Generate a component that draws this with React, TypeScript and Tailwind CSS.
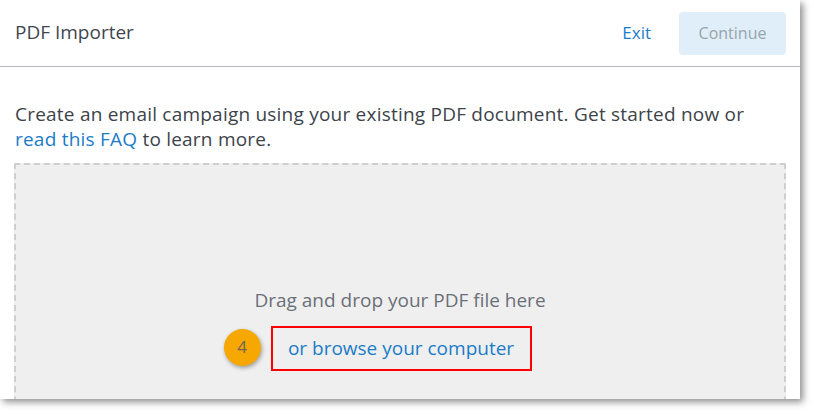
import React from "react";

export default function App() {
  return (
    <div className="w-[815px] h-[415px] bg-white overflow-hidden" style={{ fontFamily: "'Open Sans', sans-serif" }}>
      <div className="w-[800px] h-[399px] bg-white overflow-hidden flex flex-col shadow-[3px_3px_7px_rgba(0,0,0,0.45)]">
        <div className="h-[67px] shrink-0 border-b border-[#b9b8c0] flex items-center justify-between pl-[15px] pr-[14px]">
          <div className="text-[19px] text-[#3f4650] pb-[1px]">PDF Importer</div>
          <div className="flex items-center">
            <span className="text-[17px] text-[#1b7cc9] mr-[28px]">Exit</span>
            <div className="w-[107px] h-[43px] rounded-[4px] bg-[#dfeef8] flex items-center justify-center text-[16px] text-[#9aa3ab]">Continue</div>
          </div>
        </div>
        <div className="px-[14px] pt-[35px]">
          <p className="text-[19px] leading-[25px] text-[#3d434a] pl-[1px] pr-[10px] tracking-[0.22px]">
            <span>Create an email campaign using your existing PDF document. Get started now or</span>
            <br />
            <span className="text-[#1b7cc9]">read this FAQ</span> to learn more.
          </p>
          <div className="mt-[11px] h-[280px] bg-[#efefef] border-2 border-dashed border-[#cfcfcf] flex flex-col items-center pt-[121px]">
            <div className="text-[19px] text-[#6b7078]">Drag and drop your PDF file here</div>
            <div className="relative mt-[11px] ml-[2px]">
              <div className="absolute left-[-47px] top-[3px] w-[37px] h-[37px] rounded-full bg-[#f7a800] shadow-[1px_2px_4px_rgba(0,0,0,0.35)] flex items-center justify-center text-[17px] text-[#6e6552]">4</div>
              <div className="w-[261px] h-[45px] border-2 border-[#ff0000] flex items-center justify-center text-[19px] text-[#1b7cc9]">or browse your computer</div>
            </div>
          </div>
        </div>
      </div>
    </div>
  );
}
